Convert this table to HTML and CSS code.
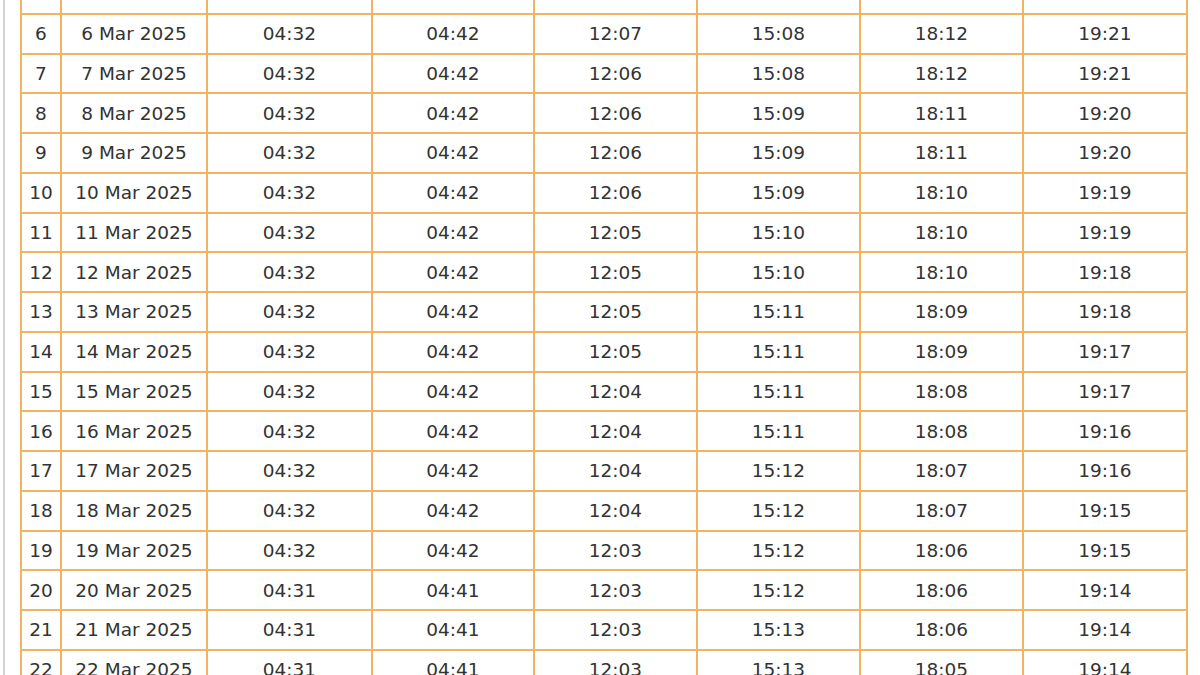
FILE: index.html
```html
<!DOCTYPE html>
<html lang="en">
<head>
<meta charset="utf-8">
<title>Prayer Times March 2025</title>
<link rel="stylesheet" href="styles.css">
</head>
<body>
<div class="page">
<table class="times">
<colgroup>
<col class="c-day"><col class="c-date"><col class="c-t1"><col class="c-t2"><col class="c-t"><col class="c-t"><col class="c-t"><col class="c-last">
</colgroup>
<tbody>
<tr><td>5</td><td>5 Mar 2025</td><td>04:32</td><td>04:42</td><td>12:07</td><td>15:07</td><td>18:13</td><td>19:21</td></tr>
<tr><td>6</td><td>6 Mar 2025</td><td>04:32</td><td>04:42</td><td>12:07</td><td>15:08</td><td>18:12</td><td>19:21</td></tr>
<tr><td>7</td><td>7 Mar 2025</td><td>04:32</td><td>04:42</td><td>12:06</td><td>15:08</td><td>18:12</td><td>19:21</td></tr>
<tr><td>8</td><td>8 Mar 2025</td><td>04:32</td><td>04:42</td><td>12:06</td><td>15:09</td><td>18:11</td><td>19:20</td></tr>
<tr><td>9</td><td>9 Mar 2025</td><td>04:32</td><td>04:42</td><td>12:06</td><td>15:09</td><td>18:11</td><td>19:20</td></tr>
<tr><td>10</td><td>10 Mar 2025</td><td>04:32</td><td>04:42</td><td>12:06</td><td>15:09</td><td>18:10</td><td>19:19</td></tr>
<tr><td>11</td><td>11 Mar 2025</td><td>04:32</td><td>04:42</td><td>12:05</td><td>15:10</td><td>18:10</td><td>19:19</td></tr>
<tr><td>12</td><td>12 Mar 2025</td><td>04:32</td><td>04:42</td><td>12:05</td><td>15:10</td><td>18:10</td><td>19:18</td></tr>
<tr><td>13</td><td>13 Mar 2025</td><td>04:32</td><td>04:42</td><td>12:05</td><td>15:11</td><td>18:09</td><td>19:18</td></tr>
<tr><td>14</td><td>14 Mar 2025</td><td>04:32</td><td>04:42</td><td>12:05</td><td>15:11</td><td>18:09</td><td>19:17</td></tr>
<tr><td>15</td><td>15 Mar 2025</td><td>04:32</td><td>04:42</td><td>12:04</td><td>15:11</td><td>18:08</td><td>19:17</td></tr>
<tr><td>16</td><td>16 Mar 2025</td><td>04:32</td><td>04:42</td><td>12:04</td><td>15:11</td><td>18:08</td><td>19:16</td></tr>
<tr><td>17</td><td>17 Mar 2025</td><td>04:32</td><td>04:42</td><td>12:04</td><td>15:12</td><td>18:07</td><td>19:16</td></tr>
<tr><td>18</td><td>18 Mar 2025</td><td>04:32</td><td>04:42</td><td>12:04</td><td>15:12</td><td>18:07</td><td>19:15</td></tr>
<tr><td>19</td><td>19 Mar 2025</td><td>04:32</td><td>04:42</td><td>12:03</td><td>15:12</td><td>18:06</td><td>19:15</td></tr>
<tr><td>20</td><td>20 Mar 2025</td><td>04:31</td><td>04:41</td><td>12:03</td><td>15:12</td><td>18:06</td><td>19:14</td></tr>
<tr><td>21</td><td>21 Mar 2025</td><td>04:31</td><td>04:41</td><td>12:03</td><td>15:13</td><td>18:06</td><td>19:14</td></tr>
<tr><td>22</td><td>22 Mar 2025</td><td>04:31</td><td>04:41</td><td>12:03</td><td>15:13</td><td>18:05</td><td>19:14</td></tr>
</tbody>
</table>
</div>
</body>
</html>
```
FILE: styles.css
```css
html, body {
  margin: 0;
  padding: 0;
  background: #ffffff;
  overflow: hidden;
}
.page {
  margin-left: 3px;
  border-left: 2px solid #d4d4d4;
  padding-left: 15px;
  height: 675px;
  overflow: hidden;
}
.times {
  border-collapse: collapse;
  table-layout: fixed;
  width: 1166px;
  margin-top: -27px;
  font-family: "DejaVu Sans", Verdana, sans-serif;
  font-size: 18.5px;
  color: #333333;
}
.c-day { width: 40px; }
.c-date { width: 146px; }
.c-t1 { width: 165px; }
.c-t2 { width: 162px; }
.c-t { width: 163px; }
.c-last { width: 164px; }
.times td {
  border: 2px solid #f2b463;
  height: 37.75px;
  padding: 0;
  text-align: center;
  vertical-align: middle;
  white-space: nowrap;
}
```
